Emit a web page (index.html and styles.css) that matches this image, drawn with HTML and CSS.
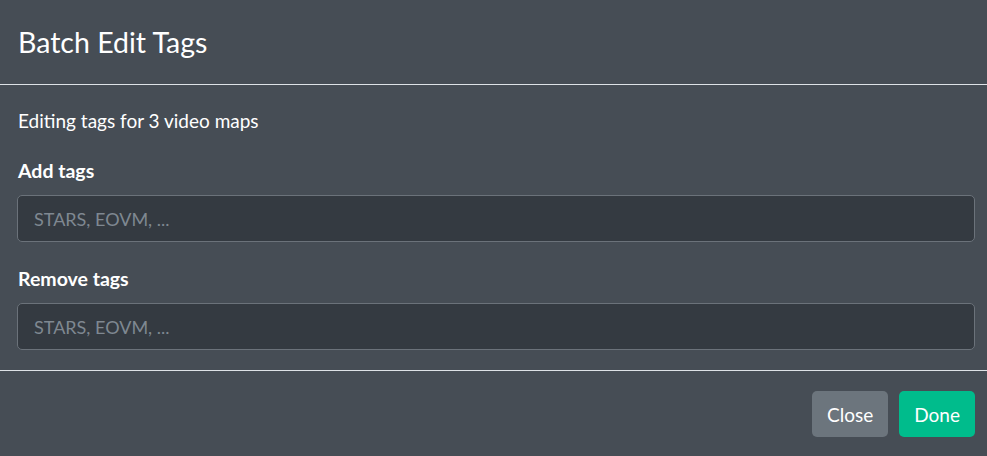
FILE: index.html
```html
<!DOCTYPE html>
<html lang="en">
<head>
<meta charset="utf-8">
<title>Batch Edit Tags</title>
<link rel="stylesheet" href="styles.css">
</head>
<body>
<div class="modal">
  <div class="modal-header">
    <h4 class="modal-title">Batch Edit Tags</h4>
  </div>
  <div class="modal-body">
    <p class="intro">Editing tags for 3 video maps</p>
    <div class="field">
      <label class="label" for="add">Add tags</label>
      <input class="input" id="add" type="text" placeholder="STARS, EOVM, ...">
    </div>
    <div class="field">
      <label class="label" for="remove">Remove tags</label>
      <input class="input" id="remove" type="text" placeholder="STARS, EOVM, ...">
    </div>
  </div>
  <div class="modal-footer">
    <button class="btn btn-secondary" type="button">Close</button>
    <button class="btn btn-success" type="button">Done</button>
  </div>
</div>
</body>
</html>
```

FILE: styles.css
```css
html, body {
  margin: 0;
  padding: 0;
  background: #464d55;
}

body {
  font-family: "Lato", "Liberation Sans", sans-serif;
  font-size: 19px;
  color: #ffffff;
}

.modal {
  display: flex;
  flex-direction: column;
  height: 456px;
}

.modal-header {
  height: 85px;
  box-sizing: border-box;
  padding: 0 18px;
  display: flex;
  align-items: center;
  border-bottom: 1px solid #dee2e6;
}

.modal-title {
  margin: 0;
  font-size: 28.5px;
  font-weight: 400;
  line-height: 36px;
}

.modal-body {
  padding: 21px 12px 20px 17px;
  border-bottom: 1px solid #dee2e6;
}

.intro {
  margin: 0 0 20px 1px;
  line-height: 30px;
}

.field + .field {
  margin-top: 22px;
}

.label {
  display: block;
  font-weight: 700;
  font-size: 19.5px;
  line-height: 30px;
  margin: 0 0 9px 1px;
}

.input {
  display: block;
  width: 100%;
  box-sizing: border-box;
  height: 47px;
  padding: 0 16px;
  font-family: inherit;
  font-size: 19px;
  color: #ffffff;
  background: #343a41;
  border: 1px solid #6b727a;
  border-radius: 5px;
  outline: none;
}

.input::placeholder {
  color: #7f8891;
  font-size: 18px;
  opacity: 1;
}

.modal-footer {
  flex: 1;
  display: flex;
  justify-content: flex-end;
  align-items: flex-start;
  gap: 11px;
  padding: 20px 12px 0 0;
}

.btn {
  height: 46px;
  padding: 0 15px;
  font-family: inherit;
  font-size: 19px;
  color: #ffffff;
  border: none;
  border-radius: 5px;
  cursor: pointer;
}

.btn-secondary {
  background: #6c757d;
}

.btn-success {
  background: #00bc8c;
}
```
